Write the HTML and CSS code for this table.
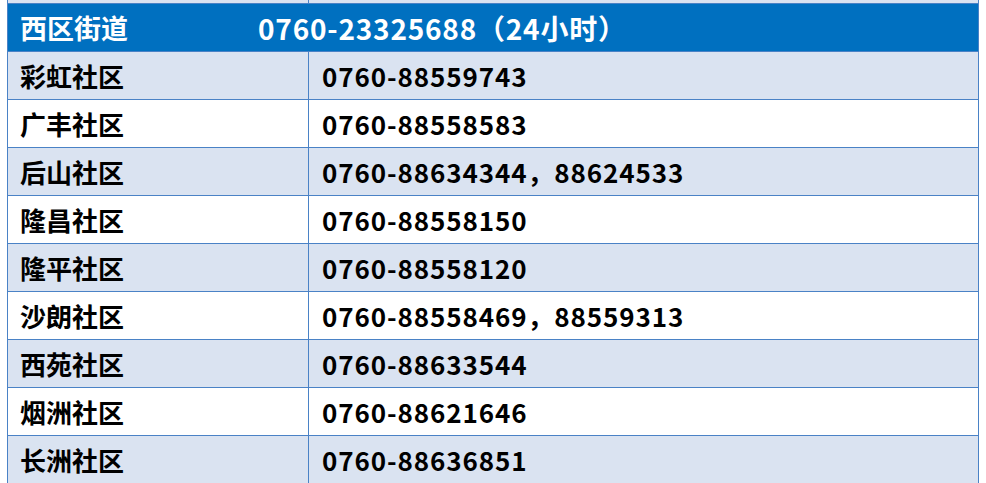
FILE: index.html
```html
<!DOCTYPE html>
<html lang="zh">
<head>
<meta charset="utf-8">
<link rel="stylesheet" href="styles.css">
</head>
<body>
<table class="tbl">
  <tr class="stub"><td class="c1"></td><td class="c2"></td></tr>
  <tr class="head">
    <td colspan="2"><div class="head-in"><span class="h-name">西区街道</span><span class="h-phone">0760-23325688（24小时）</span></div></td>
  </tr>
  <tr class="alt"><td class="c1">彩虹社区</td><td class="c2">0760-88559743</td></tr>
  <tr><td class="c1">广丰社区</td><td class="c2">0760-88558583</td></tr>
  <tr class="alt"><td class="c1">后山社区</td><td class="c2">0760-88634344，88624533</td></tr>
  <tr><td class="c1">隆昌社区</td><td class="c2">0760-88558150</td></tr>
  <tr class="alt"><td class="c1">隆平社区</td><td class="c2">0760-88558120</td></tr>
  <tr><td class="c1">沙朗社区</td><td class="c2">0760-88558469，88559313</td></tr>
  <tr class="alt"><td class="c1">西苑社区</td><td class="c2">0760-88633544</td></tr>
  <tr><td class="c1">烟洲社区</td><td class="c2">0760-88621646</td></tr>
  <tr class="alt"><td class="c1">长洲社区</td><td class="c2">0760-88636851</td></tr>
</table>
</body>
</html>
```
FILE: styles.css
```css
html, body {
  margin: 0;
  padding: 0;
  background: #ffffff;
  overflow: hidden;
}
.tbl {
  margin-left: 7px;
  border-collapse: collapse;
  width: 972px;
  table-layout: fixed;
  font-family: "Noto Sans CJK SC", "Microsoft YaHei", sans-serif;
  font-weight: 700;
  font-size: 26px;
  color: #000000;
}
.tbl td {
  border: 1px solid #4a82c6;
  height: 47px;
  padding: 0 0 0 12px;
  vertical-align: middle;
  line-height: 1;
  white-space: nowrap;
}
.tbl .c1 { width: 288px; }
.tbl .c2 { padding-left: 13px; letter-spacing: 0.9px; }
.tbl tr.stub td {
  height: 3px;
  background: #dae3f1;
  border-top: none;
}
.tbl tr.alt td { background: #dae3f1; }
.tbl tr.head td {
  background: #0070c0;
  color: #ffffff;
  height: 47px;
  padding-left: 12px;
}
.head-in {
  display: flex;
  align-items: center;
}
.h-name { width: 238px; font-size: 27px; }
.h-phone { font-size: 28px; letter-spacing: 0.8px; }
```
